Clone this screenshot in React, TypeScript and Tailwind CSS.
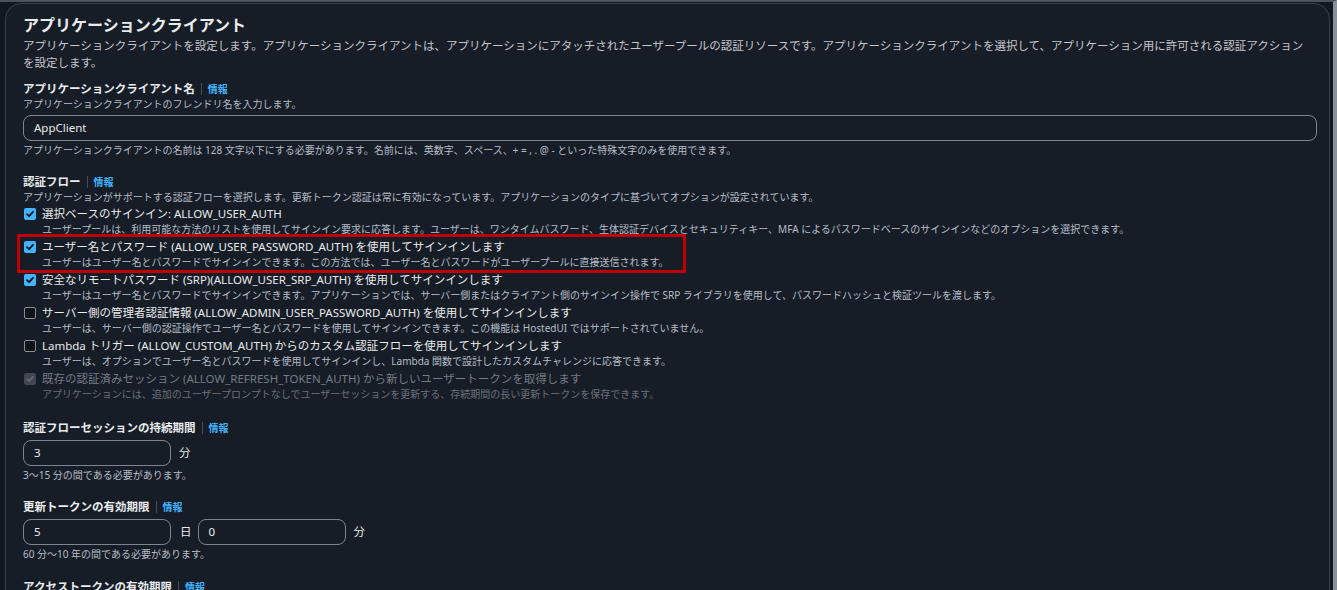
import React from "react";

// Shared text styles
const FONT = "font-['Noto_Sans','Noto_Sans_CJK_JP',sans-serif]";

const Info = () => (
  <>
    <span className="mx-[6px] inline-block h-[12px] w-px bg-[#414d5c] align-middle" />
    <span className="text-[10px] font-bold text-[#42b4ff]">情報</span>
  </>
);

const FieldLabel = ({ children }: { children: React.ReactNode }) => (
  <div className="flex h-[16px] items-center text-[11.5px] font-bold leading-[16px] text-[#e9ebed]">
    {children}
    <Info />
  </div>
);

const Hint = ({ children }: { children: React.ReactNode }) => (
  <p className="h-[14px] text-[10px] leading-[14px] text-[#b6bec9]">{children}</p>
);

const TextInput = ({ value, className = "" }: { value: string; className?: string }) => (
  <div
    className={`flex h-[26px] items-center rounded-[8px] border border-[#7d8590] bg-[#161d26] pl-[10px] text-[11.5px] text-[#e9ebed] ${className}`}
  >
    {value}
  </div>
);

type Flow = {
  label: string;
  desc: string;
  state: "checked" | "unchecked" | "disabled";
  highlight?: boolean;
};

const flows: Flow[] = [
  {
    label: "選択ベースのサインイン: ALLOW_USER_AUTH",
    desc: "ユーザープールは、利用可能な方法のリストを使用してサインイン要求に応答します。ユーザーは、ワンタイムパスワード、生体認証デバイスとセキュリティキー、MFA によるパスワードベースのサインインなどのオプションを選択できます。",
    state: "checked",
  },
  {
    label: "ユーザー名とパスワード (ALLOW_USER_PASSWORD_AUTH) を使用してサインインします",
    desc: "ユーザーはユーザー名とパスワードでサインインできます。この方法では、ユーザー名とパスワードがユーザープールに直接送信されます。",
    state: "checked",
    highlight: true,
  },
  {
    label: "安全なリモートパスワード (SRP)(ALLOW_USER_SRP_AUTH) を使用してサインインします",
    desc: "ユーザーはユーザー名とパスワードでサインインできます。アプリケーションでは、サーバー側またはクライアント側のサインイン操作で SRP ライブラリを使用して、パスワードハッシュと検証ツールを渡します。",
    state: "checked",
  },
  {
    label: "サーバー側の管理者認証情報 (ALLOW_ADMIN_USER_PASSWORD_AUTH) を使用してサインインします",
    desc: "ユーザーは、サーバー側の認証操作でユーザー名とパスワードを使用してサインインできます。この機能は HostedUI ではサポートされていません。",
    state: "unchecked",
  },
  {
    label: "Lambda トリガー (ALLOW_CUSTOM_AUTH) からのカスタム認証フローを使用してサインインします",
    desc: "ユーザーは、オプションでユーザー名とパスワードを使用してサインインし、Lambda 関数で設計したカスタムチャレンジに応答できます。",
    state: "unchecked",
  },
  {
    label: "既存の認証済みセッション (ALLOW_REFRESH_TOKEN_AUTH) から新しいユーザートークンを取得します",
    desc: "アプリケーションには、追加のユーザープロンプトなしでユーザーセッションを更新する、存続期間の長い更新トークンを保存できます。",
    state: "disabled",
  },
];

const Checkbox = ({ state }: { state: Flow["state"] }) => {
  if (state === "unchecked") {
    return <span className="mt-[2px] block h-[12px] w-[12px] shrink-0 rounded-[2px] border border-[#8c8c94] bg-[#0f141a]" />;
  }
  const bg = state === "checked" ? "bg-[#42b4ff]" : "bg-[#424650]";
  const stroke = state === "checked" ? "#0f141a" : "#656871";
  return (
    <span className={`mt-[2px] flex h-[12px] w-[12px] shrink-0 items-center justify-center rounded-[2px] ${bg}`}>
      <svg width="10" height="10" viewBox="0 0 10 10">
        <path d="M2 5.2 4.1 7.2 8 2.8" fill="none" stroke={stroke} strokeWidth="1.8" strokeLinecap="round" strokeLinejoin="round" />
      </svg>
    </span>
  );
};

const FlowItem = ({ flow }: { flow: Flow }) => {
  const off = flow.state === "disabled";
  return (
    <div className="relative flex gap-[6px] pl-[1px]">
      <Checkbox state={flow.state} />
      <div>
        <div className={`h-[16px] text-[11.5px] leading-[16px] ${off ? "text-[#757b84]" : "text-[#e9ebed]"}`}>
          {flow.label}
        </div>
        <div className={`h-[15px] text-[10px] leading-[15px] ${off ? "text-[#6b7079]" : "text-[#b6bec9]"}`}>
          {flow.desc}
        </div>
      </div>
      {flow.highlight && (
        <div className="pointer-events-none absolute left-[-6px] top-[-5px] h-[39px] w-[669px] border-[3px] border-[#c00000]" />
      )}
    </div>
  );
};

export default function App() {
  return (
    <div className={`h-[590px] w-[1337px] overflow-hidden border-t-2 border-r-4 border-t-[#4a525c] border-r-[#8a9099] bg-[#12181f] ${FONT}`}>
      <div className="ml-[5px] mr-[3px] mt-[1px] min-h-[700px] rounded-t-[16px] border border-[#39414c] bg-[#161d26] pl-[17px] pr-[12px] pt-[10px]">
        {/* Header */}
        <h1 className="h-[22px] text-[16px] font-bold leading-[22px] text-[#e9ebed]">アプリケーションクライアント</h1>
        <p className="mt-[1px] text-[11.5px] leading-[17px] text-[#c6c6cd]">
          アプリケーションクライアントを設定します。アプリケーションクライアントは、アプリケーションにアタッチされたユーザープールの認証リソースです。アプリケーションクライアントを選択して、アプリケーション用に許可される認証アクション
          <br />
          を設定します。
        </p>

        {/* Client name */}
        <div className="mt-[10px]">
          <FieldLabel>アプリケーションクライアント名</FieldLabel>
          <Hint>アプリケーションクライアントのフレンドリ名を入力します。</Hint>
          <TextInput value="AppClient" className="mt-[4px]" />
          <div className="mt-[2px]">
            <Hint>
              アプリケーションクライアントの名前は 128 文字以下にする必要があります。名前には、英数字、スペース、+ = , . @ - といった特殊文字のみを使用できます。
            </Hint>
          </div>
        </div>

        {/* Auth flows */}
        <div className="mt-[17px]">
          <FieldLabel>認証フロー</FieldLabel>
          <Hint>
            アプリケーションがサポートする認証フローを選択します。更新トークン認証は常に有効になっています。アプリケーションのタイプに基づいてオプションが設定されています。
          </Hint>
          <div className="mt-[2px] flex flex-col gap-[2px]">
            {flows.map((f) => (
              <FlowItem key={f.label} flow={f} />
            ))}
          </div>
        </div>

        {/* Auth flow session duration */}
        <div className="mt-[18px]">
          <FieldLabel>認証フローセッションの持続期間</FieldLabel>
          <div className="mt-[4px] flex items-center gap-[8px]">
            <TextInput value="3" className="w-[148px]" />
            <span className="text-[11.5px] text-[#e9ebed]">分</span>
          </div>
          <div className="mt-[2px]">
            <Hint>3〜15 分の間である必要があります。</Hint>
          </div>
        </div>

        {/* Refresh token expiry */}
        <div className="mt-[17px]">
          <FieldLabel>更新トークンの有効期限</FieldLabel>
          <div className="mt-[4px] flex items-center">
            <TextInput value="5" className="w-[148px]" />
            <span className="ml-[9px] mr-[6px] text-[11.5px] text-[#e9ebed]">日</span>
            <TextInput value="0" className="w-[148px]" />
            <span className="ml-[8px] text-[11.5px] text-[#e9ebed]">分</span>
          </div>
          <div className="mt-[2px]">
            <Hint>60 分〜10 年の間である必要があります。</Hint>
          </div>
        </div>

        {/* Access token expiry */}
        <div className="mt-[18px]">
          <FieldLabel>アクセストークンの有効期限</FieldLabel>
        </div>
      </div>
    </div>
  );
}
